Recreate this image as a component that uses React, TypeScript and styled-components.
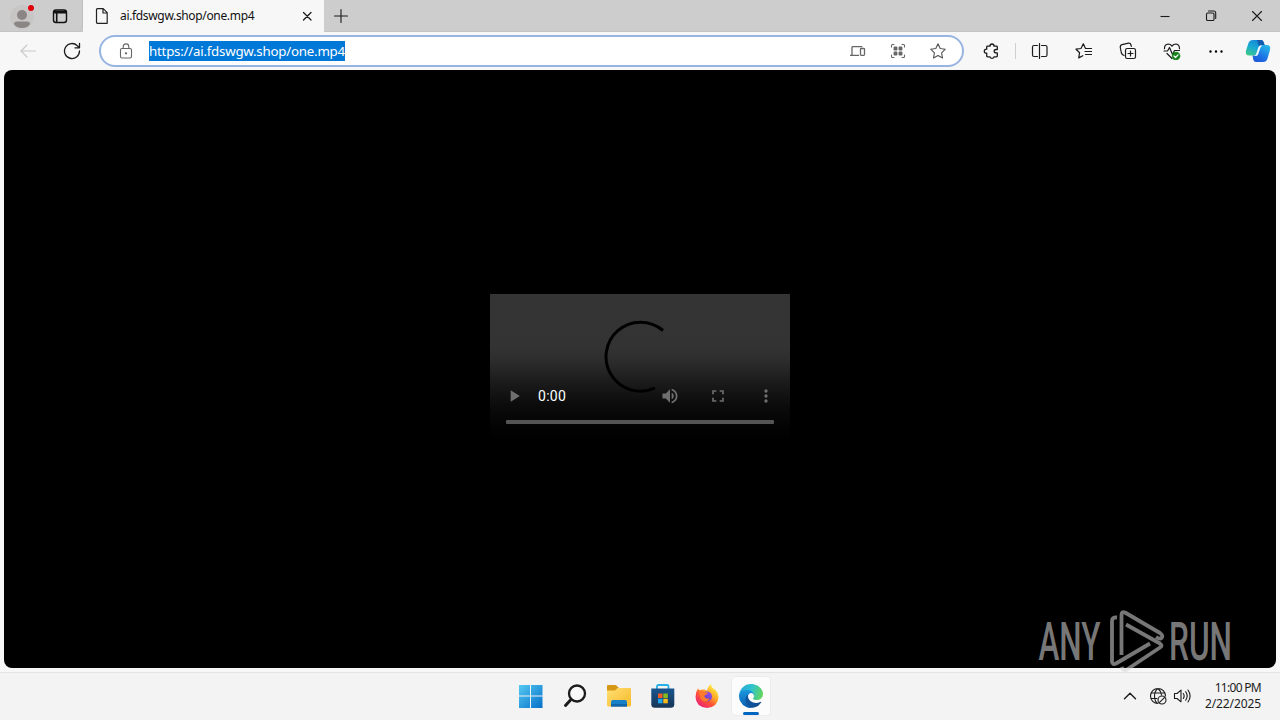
import { FC, ReactNode } from "react";
import styled, { createGlobalStyle, css } from "styled-components";

const uiFont = `"Noto Sans", "Open Sans", sans-serif`;

const GlobalStyle = createGlobalStyle`
  * {
    box-sizing: border-box;
  }
  body {
    margin: 0;
    overflow: hidden;
    font-family: ${uiFont};
  }
  svg {
    display: block;
    flex: none;
  }
`;

const Desktop = styled.div`
  position: relative;
  display: flex;
  flex-direction: column;
  width: 1280px;
  height: 720px;
  overflow: hidden;
  background: #f7f7f7;
`;

const TabStrip = styled.header`
  display: flex;
  height: 32px;
  background: #cdcdcd;
  border-bottom: 1px solid #c4c4c4;
`;

const StripCell = styled.div<{ $width: number }>`
  display: flex;
  align-items: center;
  justify-content: center;
  width: ${({ $width }) => $width}px;
  height: 32px;
`;

const Profile = styled.div`
  display: flex;
  align-items: center;
  width: 83px;
  height: 31px;
  padding-left: 9px;
  gap: 13px;
  border-radius: 0 0 5px 0;
  border-right: 1px solid #bdbdbd;
`;

const Tab = styled.div`
  display: flex;
  align-items: center;
  width: 241px;
  height: 32px;
  padding: 0 9px 0 11px;
  background: #f7f7f7;
`;

const TabTitle = styled.span`
  flex: 1;
  margin-left: 10px;
  font-size: 12px;
  letter-spacing: -0.34px;
  line-height: 16px;
  white-space: nowrap;
  color: #111;
`;

const WindowButtons = styled.div`
  display: flex;
  margin-left: auto;
`;

const Toolbar = styled.nav`
  display: flex;
  align-items: center;
  height: 38px;
  padding-left: 6px;
`;

const ToolButton = styled.div<{ $width?: number }>`
  display: flex;
  flex: none;
  align-items: center;
  justify-content: center;
  width: ${({ $width = 44 }) => $width}px;
  height: 32px;
`;

const AddressBar = styled.div`
  display: flex;
  align-items: center;
  width: 865px;
  height: 32px;
  margin: 0 5px;
  padding: 0 4px 0 17px;
  border: 2px solid #98b4e2;
  border-radius: 16px;
  background: #fff;
`;

const Url = styled.span`
  height: 20px;
  margin: 0 auto 0 15px;
  background: #0078d7;
  color: #fff;
  font-size: 13.3px;
  letter-spacing: -0.23px;
  line-height: 20px;
  white-space: nowrap;
`;

const Divider = styled.i`
  width: 1px;
  height: 16px;
  margin: 0 2px;
  background: #cfcfcf;
`;

const Page = styled.main`
  display: flex;
  align-items: center;
  justify-content: center;
  height: 598px;
  margin: 0 4px;
  border-radius: 8px;
  background: #000;
`;

const Player = styled.div`
  display: flex;
  flex-direction: column;
  justify-content: flex-end;
  position: relative;
  width: 300px;
  height: 150px;
  background: linear-gradient(
    #343434 0,
    #333 54px,
    #2c2c2c 68px,
    #1b1b1b 88px,
    #0c0c0c 110px,
    #030303 132px,
    #000 147px
  );
`;

const Spinner = styled.svg`
  position: absolute;
  top: 26px;
  left: 112px;
`;

const Controls = styled.div`
  display: flex;
  align-items: center;
  position: relative;
  height: 48px;
  color: #6f6f6f;
`;

const Time = styled.span`
  margin-right: auto;
  color: #fff;
  font-family: Roboto, sans-serif;
  font-size: 14px;
  letter-spacing: 0.3px;
`;

const Timeline = styled.div`
  position: relative;
  height: 4px;
  margin: 0 16px 20px;
  border-radius: 1px;
  background: #555;
`;

const Taskbar = styled.footer`
  display: flex;
  align-items: center;
  height: 48px;
  margin-top: 4px;
  padding: 0 0 2px 509px;
  border-top: 1px solid #e3e3e3;
  background: #f3f3f3;
`;

const AppSlot = styled.div<{ $active?: boolean }>`
  display: flex;
  flex-direction: column;
  align-items: center;
  justify-content: center;
  width: 38px;
  height: 38px;
  margin: 0 3px;
  border-radius: 4px;

  ${({ $active }) =>
    $active &&
    css`
      position: relative;
      background: #fcfcfc;
      box-shadow: 0 0 0 1px #ececec;

      &::after {
        content: "";
        position: absolute;
        bottom: 0;
        width: 16px;
        height: 3px;
        border-radius: 2px;
        background: #0067c0;
      }
    `}
`;

const Tray = styled.div`
  display: flex;
  align-items: center;
  margin-left: auto;
  padding-right: 19px;
`;

const TrayCell = styled.div<{ $width: number }>`
  display: flex;
  justify-content: center;
  width: ${({ $width }) => $width}px;
`;

const Clock = styled.div`
  width: 67px;
  padding-top: 1px;
  color: #1c1c1c;
  font-size: 12px;
  line-height: 16px;
  text-align: right;
  white-space: nowrap;
`;

const ClockTime = styled.div`
  letter-spacing: -0.7px;
`;

const ClockDate = styled.div`
  letter-spacing: -0.1px;
`;

const Watermark = styled.svg`
  position: absolute;
  top: 602px;
  left: 1034px;
`;

interface IconProps {
  size?: number;
  color?: string;
  weight?: number;
  children: ReactNode;
}

const Icon: FC<IconProps> = ({ size = 16, color = "#1b1b1b", weight = 1.1, children }) => (
  <svg
    width={size}
    height={size}
    viewBox={`0 0 ${size} ${size}`}
    fill="none"
    stroke={color}
    strokeWidth={weight}
    strokeLinecap="round"
    strokeLinejoin="round"
  >
    {children}
  </svg>
);

const ProfileIcon = () => (
  <svg width="26" height="28" viewBox="0 0 26 28">
    <circle cx="13" cy="15" r="12" fill="#c8c6c5" />
    <circle cx="13" cy="13" r="5" fill="#8b8683" />
    <path d="M5 22Q5 19.500 8 19.500h10q3 0 3 2.500-2 4-8 4t-8-4" fill="#8b8683" />
    <circle cx="22" cy="6" r="3" fill="#e3000b" />
  </svg>
);

const CopilotIcon = () => (
  <svg width="26" height="26" viewBox="0 0 26 26">
    <defs>
      <linearGradient id="copA" x1="0.7" y1="0" x2="0.2" y2="1">
        <stop stopColor="#1683d8" />
        <stop offset=".5" stopColor="#18a9d4" />
        <stop offset="1" stopColor="#3cc98a" />
      </linearGradient>
      <linearGradient id="copB" x1=".8" y1="0" x2=".2" y2="1">
        <stop stopColor="#27b9e8" />
        <stop offset=".6" stopColor="#1b74e5" />
        <stop offset="1" stopColor="#2059d9" />
      </linearGradient>
    </defs>
    <path
      d="M8 2h8q2 0 2.600 2l1 3h-3q-2 0-2.600 2l-2 6q-.8 2.500-3 2.500H4q-4 0-3-5L3.500 5Q4.500 2 8 2z"
      fill="url(#copA)"
    />
    <path d="M12 2h4q2 0 2.600 2l1 3h-3q-2 0-2.600 2z" fill="#135cae" />
    <path
      d="M18 24h-7q-2 0-2.600-2L7.500 17.500H9q2 0 2.600-2l2-6.500q.8-2 3-2H22q4 0 3 5l-2.500 8.500Q21.500 24 18 24z"
      fill="url(#copB)"
    />
    <path d="M13.300 9.500q.5-2 2.500-2h1.500q-1.500 1-2 2.500l-2 6q-.6 1.800-2.500 2H8q2.500 0 3.200-2z" fill="#f1faff" />
  </svg>
);

const WindowsIcon = () => (
  <svg width="24" height="24" viewBox="0 0 24 24">
    <defs>
      <linearGradient id="win" x1="0" y1="0" x2="1" y2="1">
        <stop stopColor="#55c9f2" />
        <stop offset="1" stopColor="#0570c9" />
      </linearGradient>
    </defs>
    <path d="M0 1h11v10.500H0zM12 1h11.500v10.500H12zM0 12.500h11V24H0zM12 12.500h11.500V24H12z" fill="url(#win)" />
  </svg>
);

const FolderIcon = () => (
  <svg width="26" height="24" viewBox="0 0 26 24">
    <defs>
      <linearGradient id="fold" x1="0" y1="0" x2="1" y2="1">
        <stop stopColor="#ffdf74" />
        <stop offset="1" stopColor="#f7b928" />
      </linearGradient>
    </defs>
    <path d="M1 2q0-1 1-1h7q1 0 1.700.8L13 4v5H1z" fill="#d69714" />
    <path d="M1 6.500h8L11.500 4H24q1 0 1 1v16q0 1.500-1.500 1.500h-21Q1 22.500 1 21z" fill="url(#fold)" />
    <path d="M5 22.500V18q0-2 2-2h12q2 0 2 2v4.500z" fill="#1580c7" />
    <path d="M5 20h16v2.500H5z" fill="#0e65a8" />
  </svg>
);

const StoreIcon = () => (
  <svg width="24" height="24" viewBox="0 0 24 24">
    <defs>
      <linearGradient id="store" x1="0" y1="0" x2="0" y2="1">
        <stop stopColor="#18558f" />
        <stop offset="1" stopColor="#173557" />
      </linearGradient>
    </defs>
    <path d="M6 6V2.700Q6 1 7.500 1h8.500q1.500 0 1.500 1.700V6" fill="none" stroke="#27afe8" strokeWidth="1.800" />
    <path d="M.3 4.500h23v15.700q0 3.500-3.500 3.500h-16q-3.500 0-3.500-3.500z" fill="url(#store)" />
    <path d="M7 9.500h4.500V14H7z" fill="#f15a27" />
    <path d="M12.300 9.500h4.500V14h-4.500z" fill="#86bb1f" />
    <path d="M7 14.800h4.500v4.500H7z" fill="#20a7ec" />
    <path d="M12.300 14.800h4.500v4.500h-4.500z" fill="#fdbc1b" />
  </svg>
);

const FirefoxIcon = () => (
  <svg width="24" height="24" viewBox="0 0 24 24">
    <defs>
      <linearGradient id="fox" x1=".85" y1=".1" x2=".2" y2=".95">
        <stop stopColor="#fff04a" />
        <stop offset=".35" stopColor="#ffad27" />
        <stop offset=".65" stopColor="#ff5038" />
        <stop offset="1" stopColor="#e92178" />
      </linearGradient>
      <linearGradient id="foxCore" x1=".8" y1="0" x2=".2" y2="1">
        <stop stopColor="#9a4aea" />
        <stop offset="1" stopColor="#5547c7" />
      </linearGradient>
    </defs>
    <path
      d="M3 4.500Q4 6 5 6.200q2-1 4-.7L12 6.500q1-4.500 4-6.500 .4 3 2 4.200Q19.500 5.500 20.500 6q3 3 3 7Q23 23 12 24 1 23 .5 13 .4 8 3 4.500z"
      fill="url(#fox)"
    />
    <circle cx="12" cy="12.500" r="5" fill="url(#foxCore)" />
    <path d="M4 9q2-2.500 5.500-1 1.800.5 3.500.5-.5 2-3 2.500-1 1-.2 2.500 2.500 2 5 .5-1.500 4-5.500 3.500Q5 16 4 9z" fill="#ff7a2c" />
  </svg>
);

const EdgeIcon = () => (
  <svg width="24" height="24" viewBox="0 0 256 256">
    <defs>
      <linearGradient id="edgeTop" x1="0" y1=".3" x2="1" y2=".5">
        <stop stopColor="#2aa5dd" />
        <stop offset=".5" stopColor="#2fc4cf" />
        <stop offset="1" stopColor="#62d45c" />
      </linearGradient>
      <linearGradient id="edgeMid" x1=".5" y1="0" x2=".5" y2="1">
        <stop stopColor="#1b9de2" />
        <stop offset="1" stopColor="#0b5cae" />
      </linearGradient>
      <linearGradient id="edgeLow" x1="0" y1=".5" x2="1" y2=".6">
        <stop stopColor="#0c59a4" />
        <stop offset="1" stopColor="#114a8b" />
      </linearGradient>
    </defs>
    <path
      d="M231 190.500c-3.400 1.800-6.900 3.400-10.500 4.700a101.500 101.500 0 0 1-35.900 6.400c-47.300 0-88.500-32.500-88.500-74.300a31.500 31.500 0 0 1 16.400-27.300c-42.800 1.800-53.800 46.400-53.800 72.500 0 74 68.100 81.400 82.800 81.400 7.900 0 19.800-2.300 27-4.600l1.300-.4a128.300 128.300 0 0 0 66.600-52.800 4 4 0 0 0-5.400-5.600z"
      fill="url(#edgeLow)"
    />
    <path
      d="M105.700 241.400a79.200 79.200 0 0 1-22.700-21.300 80.700 80.700 0 0 1 29.500-120c3.200-1.500 8.500-4.100 15.600-4a32.400 32.400 0 0 1 25.700 13 31.900 31.900 0 0 1 6.300 18.700c0-.2 24.500-79.600-80-79.600-43.900 0-80 41.700-80 78.200a130.200 130.200 0 0 0 12.100 56 128 128 0 0 0 156.400 67 75.500 75.500 0 0 1-62.800-8z"
      fill="url(#edgeMid)"
    />
    <path
      d="M152.300 148.900c-.9 1-3.400 2.500-3.400 5.600 0 2.600 1.700 5.200 4.800 7.300 14.300 10 41.400 8.600 41.500 8.600a59.600 59.600 0 0 0 30.300-8.300 61.400 61.400 0 0 0 30.400-52.900c.3-22.400-8-37.300-11.300-43.900C223.500 23.900 177.700 0 128 0A128 128 0 0 0 0 126.200c.5-36.500 36.800-66 80-66 3.500 0 23.500.3 42 10.100 16.300 8.600 24.900 18.900 30.800 29.200 6.200 10.700 7.300 24.100 7.300 29.500 0 5.300-2.700 13.300-7.800 19.900z"
      fill="url(#edgeTop)"
    />
  </svg>
);

const BrowserTabs = () => (
  <TabStrip>
    <Profile>
      <ProfileIcon />
      <Icon size={24} color="#111" weight={1.4}>
        <rect x="5.500" y="6" width="13" height="12.500" rx="2.500" />
        <path d="M6.500 7.500h11.500M8.700 9v8.500" strokeWidth="1.600" />
        <path d="M6.500 8.800h11.500" />
      </Icon>
    </Profile>
    <Tab>
      <Icon color="#222" weight={1.2}>
        <path d="M3.500.7h5.700l4 4v10.600H3.500q-1 0-1-1V1.700q0-1 1-1zM9 1v4h4" />
      </Icon>
      <TabTitle>ai.fdswgw.shop/one.mp4</TabTitle>
      <Icon weight={1.3}>
        <path d="M4.500 4.500l7.500 7.500M12 4.500L4.500 12" />
      </Icon>
    </Tab>
    <StripCell $width={33}>
      <Icon>
        <path d="M8 1.500v13M1.500 8h13" />
      </Icon>
    </StripCell>
    <WindowButtons>
      <StripCell $width={46}>
        <Icon>
          <path d="M3.500 8.500h9" strokeLinecap="butt" />
        </Icon>
      </StripCell>
      <StripCell $width={46}>
        <Icon>
          <rect x="3.500" y="5" width="7.500" height="7.500" rx="1.300" />
          <path d="M5.500 3h5.200q2 0 2 2v5.500" />
        </Icon>
      </StripCell>
      <StripCell $width={46}>
        <Icon>
          <path d="M3.500 3.500l9 9M12.500 3.500l-9 9" />
        </Icon>
      </StripCell>
    </WindowButtons>
  </TabStrip>
);

const BrowserToolbar = () => (
  <Toolbar>
    <ToolButton>
      <Icon color="#c8c8c8">
        <path d="M15.500 8H1M7 2L1 8l6 6" />
      </Icon>
    </ToolButton>
    <ToolButton>
      <Icon size={18} weight={1.3}>
        <path d="M16.500 9a7.500 7.500 0 1 1-2.200-5.300L16.300 5.600M16.500 1.300v4.500H12" />
      </Icon>
    </ToolButton>
    <AddressBar>
      <Icon color="#666">
        <rect x="2.500" y="5.500" width="11" height="9.500" rx="1.500" />
        <path d="M5.200 5.500V3.700q0-2.800 2.800-2.800t2.800 2.800v1.800" />
        <circle cx="8" cy="10.300" r=".6" fill="#666" />
      </Icon>
      <Url>https://ai.fdswgw.shop/one.mp4</Url>
      <ToolButton $width={40}>
        <Icon color="#666" weight={1.3}>
          <path d="M2 11.500V4.500q0-.8.800-.8h9M.5 12.300h8.200" />
          <rect x="10.500" y="5.500" width="4" height="6.800" rx=".8" />
        </Icon>
      </ToolButton>
      <ToolButton $width={40}>
        <Icon color="#666">
          <path d="M1.500 4V2.500q0-1 1-1H4M12 1.500h1.500q1 0 1 1V4M14.500 12v1.500q0 1-1 1H12M4 14.500H2.500q-1 0-1-1V12" />
          <path d="M4.500 4.500h2v2h-2zM9.500 4.500h2v2h-2zM4.500 9.500h2v2h-2zM9.500 9.500h2v2h-2z" fill="#666" strokeWidth="1.900" />
        </Icon>
      </ToolButton>
      <ToolButton $width={40}>
        <Icon color="#555">
          <path d="M8 .8l2.200 4.700 5.100.7-3.700 3.600.9 5.200L8 12.500 3.500 15l.9-5.200L.7 6.200l5.100-.7z" />
        </Icon>
      </ToolButton>
    </AddressBar>
    <ToolButton>
      <Icon weight={1.300}>
        <path d="M4.500 3.200H7q0-2.200 2-2.200t2 2.200h2.500q.8 0 .8.8v2.500h-1.100q-2 0-2 1.700t2 1.700h1.100V13q0 .8-.8.8H11q0 1.500-2 1.500t-2-1.500H4.500q-.8 0-.8-.8v-2.800q-2.400 0-2.400-2t2.400-2V4q0-.8.800-.8z" />
      </Icon>
    </ToolButton>
    <Divider />
    <ToolButton>
      <Icon size={18} weight={1.200}>
        <path d="M6.500 3.500H3Q1.500 3.500 1.500 5v8q0 1.500 1.500 1.500h3.500M10.500 3.500H14.500q1.500 0 1.500 1.500v8q0 1.500-1.500 1.500h-4M8.500 1.500v15" />
      </Icon>
    </ToolButton>
    <ToolButton>
      <Icon size={18} weight={1.200}>
        <path d="M11.500 6.500h-1L8.300 1.800 6 6.500l-5 .7 3.600 3.500-.9 5.200 4.100-2.200M11.500 6.500h5M10 9.500h6.500M10.500 12.500h6" />
      </Icon>
    </ToolButton>
    <ToolButton>
      <Icon size={18} weight={1.200}>
        <path d="M5 13.500q-2-.6-2.600-2.500L1.300 5.500Q1 3.200 3 2.700l6.500-1.500q2-.2 2.500 1.800l.3 1.400" />
        <rect x="6.500" y="6.500" width="10" height="10" rx="1.800" />
        <path d="M11.500 9v5M9 11.500h5" />
      </Icon>
    </ToolButton>
    <ToolButton>
      <Icon size={18} weight={1.200}>
        <path d="M1.500 6.700Q1.300 2.500 5.200 2q2.300 0 3.800 2.200Q10.500 2 13 2q3.500.4 3.500 4.700M1 9h3.500l2-3.500 3 7 2-4h5M4 11.500l5 5" />
        <circle cx="13" cy="14" r="4" fill="#16821b" stroke="#16821b" strokeWidth=".4" />
        <path d="M11 14l1.500 1.500 2.500-2.700" stroke="#fff" />
      </Icon>
    </ToolButton>
    <ToolButton>
      <Icon color="#000">
        <path d="M2.500 8.500h.01M8 8.500h.01M13.500 8.500h.01" strokeWidth="2.400" />
      </Icon>
    </ToolButton>
    <ToolButton $width={40}>
      <CopilotIcon />
    </ToolButton>
  </Toolbar>
);

const VideoPlayer = () => (
  <Player>
    <Spinner width="74" height="74" viewBox="0 0 74 74" fill="none">
      <path d="M61 10.500A34.500 34.500 0 1 0 53 68" stroke="#000" strokeWidth="3" />
    </Spinner>
    <Controls>
      <ToolButton $width={48}>
        <svg width="20" height="20" viewBox="0 0 24 24" fill="currentColor">
          <path d="M8 5v14l11-7z" />
        </svg>
      </ToolButton>
      <Time>0:00</Time>
      <ToolButton $width={48}>
        <svg width="20" height="20" viewBox="0 0 24 24" fill="currentColor">
          <path d="M3 9v6h4l5 5V4L7 9H3zm13.500 3c0-1.770-1.020-3.290-2.500-4.030v8.050c1.480-.73 2.500-2.250 2.500-4.020zM14 3.230v2.060c2.890.86 5 3.540 5 6.710s-2.110 5.850-5 6.710v2.060c4.010-.91 7-4.490 7-8.770s-2.990-7.860-7-8.770z" />
        </svg>
      </ToolButton>
      <ToolButton $width={48}>
        <svg width="20" height="20" viewBox="0 0 24 24" fill="currentColor">
          <path d="M7 14H5v5h5v-2H7v-3zm-2-4h2V7h3V5H5v5zm12 7h-3v2h5v-5h-2v3zM14 5v2h3v3h2V5h-5z" />
        </svg>
      </ToolButton>
      <ToolButton $width={48}>
        <svg width="20" height="20" viewBox="0 0 24 24" fill="currentColor">
          <circle cx="12" cy="6" r="2" />
          <circle cx="12" cy="12" r="2" />
          <circle cx="12" cy="18" r="2" />
        </svg>
      </ToolButton>
    </Controls>
    <Timeline />
  </Player>
);

const SystemTaskbar = () => (
  <Taskbar>
    <AppSlot><WindowsIcon /></AppSlot>
    <AppSlot>
      <Icon size={24} weight={2.300}>
        <circle cx="14" cy="9.500" r="8" fill="#f8f8f8" />
        <path d="M8 15.500L2.500 21.500" strokeWidth="3" />
      </Icon>
    </AppSlot>
    <AppSlot><FolderIcon /></AppSlot>
    <AppSlot><StoreIcon /></AppSlot>
    <AppSlot><FirefoxIcon /></AppSlot>
    <AppSlot $active><EdgeIcon /></AppSlot>
    <Tray>
      <TrayCell $width={32}>
        <Icon weight={1.400}>
          <path d="M2.500 10.800L8 5.300l5.500 5.500" />
        </Icon>
      </TrayCell>
      <TrayCell $width={24}>
        <Icon size={18}>
          <path d="M9 16.500A7.500 7.500 0 1 1 16.500 9M9 1.500Q5.500 4 5.500 9T8.500 16.500M9 1.500Q12 4 12.500 8M2.200 6h13.600M1.800 11.500H8" />
          <circle cx="13" cy="13" r="4" />
          <path d="M10.300 15.700l5.400-5.400" />
        </Icon>
      </TrayCell>
      <TrayCell $width={24}>
        <Icon size={18}>
          <path d="M1.500 6.500H4l4-3.300v11.600l-4-3.300H1.500zM10.300 6.500q1.700 2.500 0 5M12.700 4.700q3 4.300 0 8.600M15 3q4.200 6 0 12" />
        </Icon>
      </TrayCell>
      <Clock>
        <ClockTime>11:00 PM</ClockTime>
        <ClockDate>2/22/2025</ClockDate>
      </Clock>
    </Tray>
  </Taskbar>
);

const AnyRunMark = () => (
  <Watermark width="214" height="80" viewBox="0 -4 214 80" fill="#d4d4d4" fillOpacity=".56">
    <g fontFamily="Roboto, sans-serif" fontSize="53" fontWeight="500">
      <text x="4.500" y="53.500" textLength="62" lengthAdjust="spacingAndGlyphs">ANY</text>
      <text x="135" y="53.500" textLength="63" lengthAdjust="spacingAndGlyphs">RUN</text>
    </g>
    <g opacity=".56" fill="none" stroke="#d4d4d4" strokeWidth="3.800" strokeLinejoin="round">
      <path d="M83 11.500Q78 11 78 15V56Q78.500 59 82 57.500L116 37.500" />
      <path d="M87.500 49V9Q87.500 5 91 6.500L126 27Q130 30 127 32.500 125 33 122 31" />
      <path d="M92 18.500L126 37.500Q129 39.500 126 41.500L93 63.500Q89 65 87.500 61" />
    </g>
  </Watermark>
);

const App = () => (
  <Desktop>
    <GlobalStyle />
    <BrowserTabs />
    <BrowserToolbar />
    <Page>
      <VideoPlayer />
    </Page>
    <SystemTaskbar />
    <AnyRunMark />
  </Desktop>
);

export default App;
